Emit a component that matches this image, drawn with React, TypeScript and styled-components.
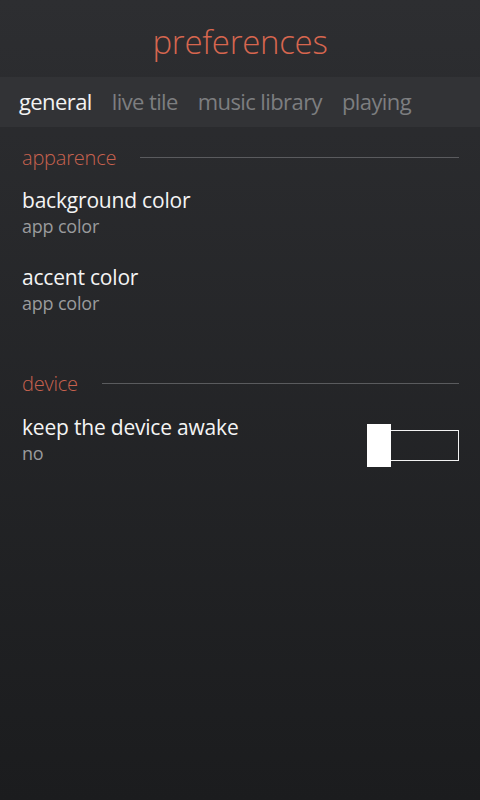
import React from "react";
import styled, { createGlobalStyle } from "styled-components";

const Global = createGlobalStyle`
  html, body { margin: 0; padding: 0; }
  body {
    width: 480px;
    height: 800px;
    overflow: hidden;
    font-family: "Open Sans", "Noto Sans", sans-serif;
    background: linear-gradient(180deg, #2d2e31 0%, #1b1c1e 100%);
  }
`;

const Page = styled.div`
  width: 480px;
  height: 800px;
  display: flex;
  flex-direction: column;
`;

const Title = styled.h1`
  margin: 0;
  height: 77px;
  box-sizing: border-box;
  padding-top: 19px;
  text-align: center;
  font-size: 33px;
  font-weight: 300;
  line-height: 46px;
  color: #d7664f;
  letter-spacing: -0.3px;
`;

const TabBar = styled.nav`
  height: 50px;
  background: #323336;
  display: flex;
  align-items: center;
  gap: 20px;
  padding-left: 19px;
  padding-bottom: 3px;
  box-sizing: border-box;
`;

const Tab = styled.span<{ $active?: boolean }>`
  font-size: 22px;
  font-weight: 400;
  letter-spacing: -0.6px;
  color: ${(p) => (p.$active ? "#f2f2f2" : "#7d7e80")};
`;

const Content = styled.main`
  padding: 17px 21px 0 22px;
  display: flex;
  flex-direction: column;
`;

const SectionHeader = styled.div<{ $top?: number }>`
  display: flex;
  align-items: center;
  gap: 24px;
  margin-top: ${(p) => p.$top ?? 0}px;
  height: 26px;
`;

const SectionLabel = styled.span`
  font-size: 20px;
  font-weight: 300;
  color: #c8624f;
  letter-spacing: -0.2px;
`;

const Rule = styled.div`
  flex: 1;
  height: 1px;
  background: #5a5b5e;
  margin-top: 1px;
`;

const Setting = styled.div<{ $top?: number }>`
  display: flex;
  align-items: flex-start;
  justify-content: space-between;
  margin-top: ${(p) => p.$top ?? 0}px;
`;

const SettingText = styled.div`
  display: flex;
  flex-direction: column;
`;

const SettingName = styled.span`
  font-size: 21px;
  line-height: 27px;
  color: #f4f4f4;
  letter-spacing: -0.2px;
`;

const SettingValue = styled.span`
  font-size: 18px;
  line-height: 25px;
  color: #9a9b9d;
  letter-spacing: -0.2px;
`;

const Toggle = styled.div`
  width: 92px;
  height: 43px;
  display: flex;
  align-items: center;
  margin-top: 10px;
`;

const Thumb = styled.div`
  width: 24px;
  height: 43px;
  background: #ffffff;
  flex-shrink: 0;
`;

const Track = styled.div`
  flex: 1;
  height: 31px;
  box-sizing: border-box;
  border: 1px solid #f2f2f2;
  border-left: none;
`;

export default function App() {
  return (
    <>
      <Global />
      <Page>
        <Title>preferences</Title>
        <TabBar>
          <Tab $active>general</Tab>
          <Tab>live tile</Tab>
          <Tab>music library</Tab>
          <Tab>playing</Tab>
        </TabBar>
        <Content>
          <SectionHeader>
            <SectionLabel>apparence</SectionLabel>
            <Rule />
          </SectionHeader>
          <Setting $top={17}>
            <SettingText>
              <SettingName>background color</SettingName>
              <SettingValue>app color</SettingValue>
            </SettingText>
          </Setting>
          <Setting $top={25}>
            <SettingText>
              <SettingName>accent color</SettingName>
              <SettingValue>app color</SettingValue>
            </SettingText>
          </Setting>
          <SectionHeader $top={54}>
            <SectionLabel>device</SectionLabel>
            <Rule />
          </SectionHeader>
          <Setting $top={18}>
            <SettingText>
              <SettingName>keep the device awake</SettingName>
              <SettingValue>no</SettingValue>
            </SettingText>
            <Toggle>
              <Thumb />
              <Track />
            </Toggle>
          </Setting>
        </Content>
      </Page>
    </>
  );
}
